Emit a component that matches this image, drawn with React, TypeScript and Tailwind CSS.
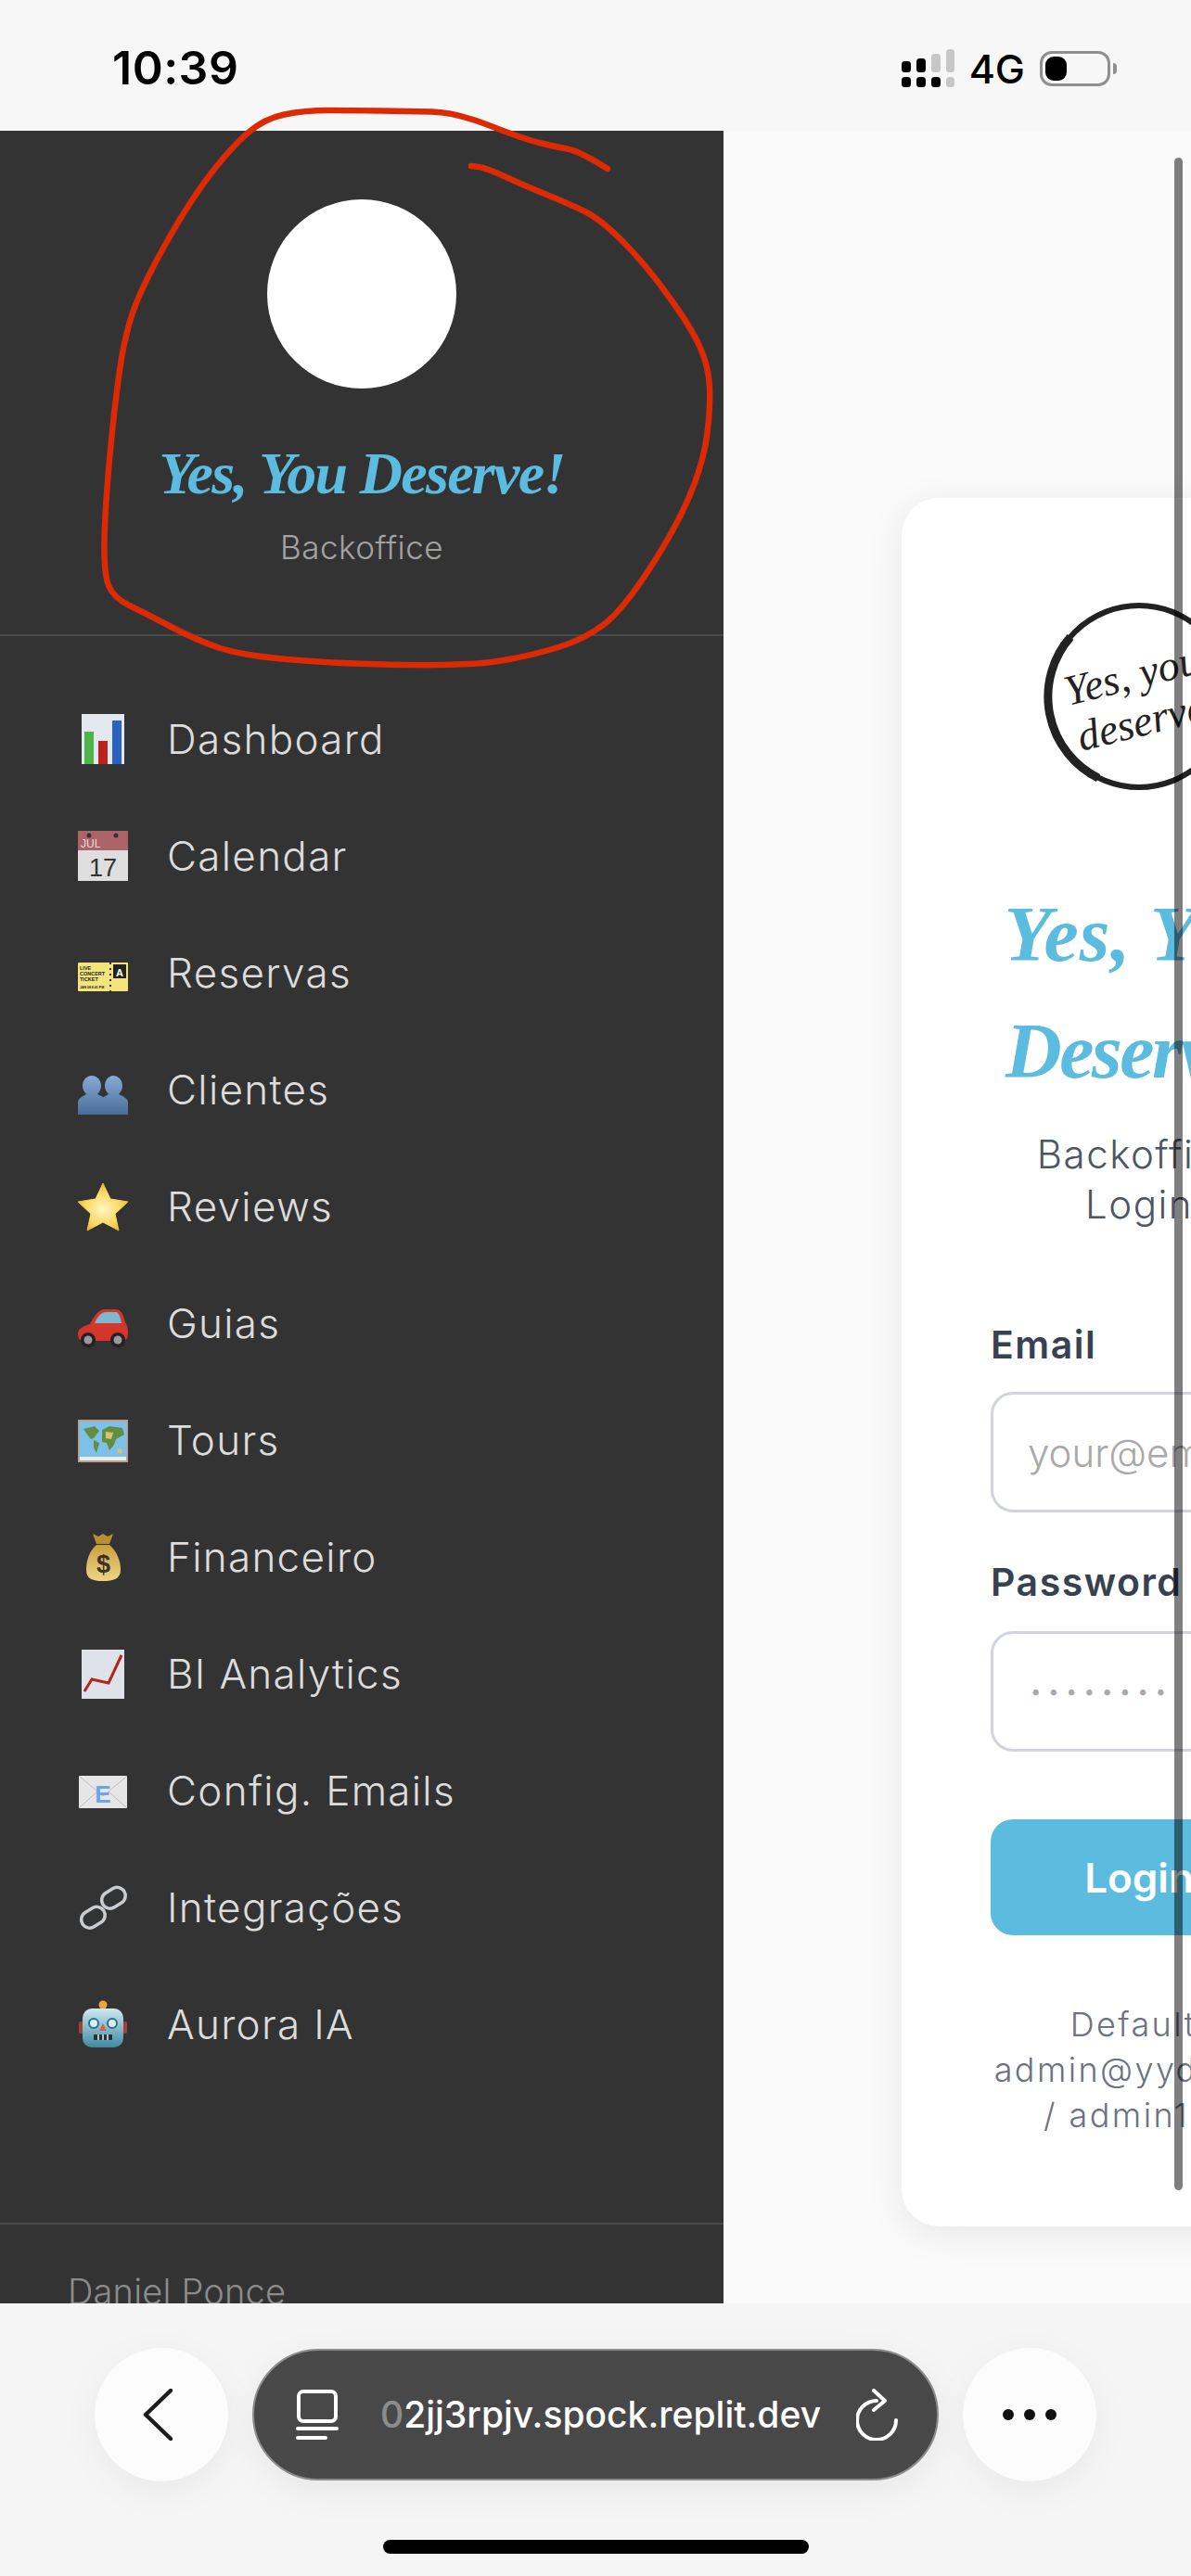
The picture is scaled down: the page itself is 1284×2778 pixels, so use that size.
const UI = "font-['Inter','Liberation_Sans',sans-serif]"
const SCRIPT = "font-['Liberation_Serif',serif] italic font-bold"

// smooth line through the hand drawn points
function smooth(pts: number[][]) {
  let d = `M${pts[0][0]} ${pts[0][1]}`
  for (let i = 1; i < pts.length - 1; i++) {
    const mx = (pts[i][0] + pts[i + 1][0]) / 2
    const my = (pts[i][1] + pts[i + 1][1]) / 2
    d += ` Q${pts[i][0]} ${pts[i][1]} ${mx} ${my}`
  }
  const last = pts[pts.length - 1]
  return d + ` L${last[0]} ${last[1]}`
}

const scribble = [
  [655, 182], [625, 163], [598, 158], [565, 150], [491, 121], [440, 120], [380, 119], [328, 119], [285, 128],
  [250, 158], [205, 216], [156, 303], [135, 358], [123, 441], [113, 551], [112, 620], [123, 645], [156, 661],
  [213, 691], [262, 707], [369, 716], [508, 718], [573, 707], [631, 689], [672, 657], [729, 569], [758, 500],
  [766, 441], [764, 395], [745, 353], [696, 285], [647, 236], [614, 220], [565, 200], [524, 181], [508, 179],
]

function Icon({ children }: { children: React.ReactNode }) {
  return (
    <svg viewBox="0 0 54 54" className="w-[54px] h-[54px] shrink-0">
      {children}
    </svg>
  )
}

const icons: Record<string, React.ReactNode> = {
  chart: (
    <Icon>
      <rect x="4" y="0" width="46" height="54" fill="#e3e7ee" />
      <rect x="7" y="19" width="10" height="35" fill="#4db548" />
      <rect x="22" y="29" width="10" height="25" fill="#b9231b" />
      <rect x="37" y="7" width="10" height="47" fill="#2a62c4" />
    </Icon>
  ),
  calendar: (
    <Icon>
      <rect x="0" y="0" width="54" height="21" fill="#ac6469" />
      <rect x="0" y="21" width="54" height="33" fill="#dedede" />
      <circle cx="12" cy="5" r="2.5" fill="#333" />
      <circle cx="41" cy="5" r="2.5" fill="#333" />
      <text x="3" y="18" fontSize="12" fill="#f0dcdc" fontFamily="Liberation Sans">JUL</text>
      <text x="27" y="49" fontSize="27" textAnchor="middle" fill="#333" fontFamily="Liberation Sans">17</text>
    </Icon>
  ),
  ticket: (
    <Icon>
      <rect x="0" y="16" width="54" height="31" rx="1" fill="#f3e57b" />
      <rect x="38" y="18" width="14" height="15" fill="#222" />
      <text x="45" y="31" fontSize="11" fontWeight="700" textAnchor="middle" fill="#fff" fontFamily="Liberation Sans">A</text>
      <text x="2" y="24" fontSize="5.5" fontWeight="700" fill="#222" fontFamily="Liberation Sans">LIVE</text>
      <text x="2" y="30" fontSize="5.5" fontWeight="700" fill="#222" fontFamily="Liberation Sans">CONCERT</text>
      <text x="2" y="36" fontSize="5.5" fontWeight="700" fill="#222" fontFamily="Liberation Sans">TICKET</text>
      <text x="2" y="44" fontSize="3.5" fontWeight="700" fill="#222" fontFamily="Liberation Sans">JAN 08 8:41 PM</text>
      <path d="M35 16v31" stroke="#333" strokeWidth="2" strokeDasharray="2 4" />
    </Icon>
  ),
  clients: (
    <Icon>
      <defs>
        <linearGradient id="cl" x1="0" y1="0" x2="0" y2="1">
          <stop offset="0" stopColor="#86aad6" />
          <stop offset="1" stopColor="#4a6d99" />
        </linearGradient>
      </defs>
      <path d="M38 12c6 0 10 5 10 11 0 4-2 7-4 9 4 2 9 4 10 8v14H24V40c1-4 6-6 9-8-2-2-4-5-4-9 0-6 4-11 9-11z" fill="url(#cl)" />
      <path d="M15 12c6 0 10 5 10 11 0 4-2 7-4 9 4 2 9 4 10 8v14H0V40c1-4 6-6 9-8-2-2-4-5-4-9 0-6 4-11 10-11z" fill="url(#cl)" />
    </Icon>
  ),
  star: (
    <Icon>
      <defs>
        <radialGradient id="st" cx="0.5" cy="0.55" r="0.6">
          <stop offset="0" stopColor="#fff6c4" />
          <stop offset="0.6" stopColor="#fbd860" />
          <stop offset="1" stopColor="#e8a81f" />
        </radialGradient>
      </defs>
      <path d="M27 2l8 17 19 3-14 13 4 18-17-9-17 9 4-18L0 22l19-3z" fill="url(#st)" stroke="url(#st)" strokeWidth="1" strokeLinejoin="round" />
    </Icon>
  ),
  car: (
    <Icon>
      <path d="M0 38c0-5 6-8 13-10 4-8 9-16 16-16h11c7 0 9 6 11 14 2 3 3 6 3 12 0 6-3 8-6 8H6c-4 0-6-3-6-8z" fill="#d5362b" />
      <path d="M18 27c3-7 7-12 12-12h11c3 0 5 6 6 12z" fill="#7fb7cf" />
      <circle cx="11" cy="45" r="8" fill="#222" />
      <circle cx="11" cy="45" r="4.5" fill="#9a9a9a" />
      <circle cx="43" cy="45" r="8" fill="#222" />
      <circle cx="43" cy="45" r="4.5" fill="#9a9a9a" />
    </Icon>
  ),
  map: (
    <Icon>
      <rect x="0" y="5" width="54" height="46" fill="#c09f8a" />
      <rect x="1.5" y="7" width="51" height="42" fill="#7fc0ea" />
      <path d="M6 15l12-3 5 5-6 8-3 1-4-5zM17 27l6 3-3 11-3-6zM26 16l8-4 14 2 2 7-9 5-2 6-5 6-3-8-5-1z" fill="#5f8f3f" />
      <path d="M30 18l8 1-2 7-6-1zM43 36l5 1-1 5-5-2z" fill="#d8c374" />
      <path d="M2 45h50v4H2z" fill="#e6eef2" />
    </Icon>
  ),
  money: (
    <Icon>
      <defs>
        <linearGradient id="mo" x1="0" y1="0" x2="0" y2="1">
          <stop offset="0" stopColor="#caa03f" />
          <stop offset="1" stopColor="#efd486" />
        </linearGradient>
      </defs>
      <path d="M16 2l6 3 5-3 5 3 6-3-4 11h-14z" fill="#b98f34" />
      <path d="M20 14h14c8 7 12 17 12 27 0 10-8 12-19 12S9 51 9 41c0-10 3-20 11-27z" fill="url(#mo)" />
      <text x="27.5" y="44" fontSize="27" fontWeight="700" textAnchor="middle" fill="#3a3428" fontFamily="Liberation Sans">$</text>
    </Icon>
  ),
  trend: (
    <Icon>
      <rect x="4" y="1" width="46" height="54" fill="#dfe2e9" />
      <path d="M7 46l8-13 18 4 14-30" fill="none" stroke="#b3261e" strokeWidth="3" />
    </Icon>
  ),
  mail: (
    <Icon>
      <rect x="1" y="11" width="52" height="35" rx="1" fill="#e6e6e6" />
      <path d="M2 12l25 21 25-21M2 45l19-17M52 45L33 28" fill="none" stroke="#bdbdbd" strokeWidth="1" />
      <text x="27" y="40" fontSize="26" fontWeight="700" textAnchor="middle" fill="#6ea3ea" fontFamily="Liberation Sans">E</text>
    </Icon>
  ),
  link: (
    <Icon>
      <g fill="none" stroke="#c9ccd0" strokeWidth="3.5">
        <rect x="-13" y="-9" width="27" height="18" rx="9" transform="translate(16 38) rotate(-32)" />
        <rect x="-13" y="-9" width="27" height="18" rx="9" transform="translate(38 17) rotate(-32)" />
      </g>
    </Icon>
  ),
  robot: (
    <Icon>
      <defs>
        <linearGradient id="ro" x1="0" y1="0" x2="0" y2="1">
          <stop offset="0" stopColor="#cfe9ef" />
          <stop offset="1" stopColor="#3f8aa0" />
        </linearGradient>
      </defs>
      <circle cx="27" cy="6" r="4.5" fill="#e9a838" />
      <rect x="1" y="24" width="5" height="13" rx="2" fill="#a8403a" />
      <rect x="48" y="24" width="5" height="13" rx="2" fill="#a8403a" />
      <rect x="5" y="10" width="44" height="42" rx="10" fill="url(#ro)" />
      <circle cx="17" cy="26" r="5" fill="#d6f1f6" stroke="#2d6f86" strokeWidth="2" />
      <circle cx="37" cy="26" r="5" fill="#d6f1f6" stroke="#2d6f86" strokeWidth="2" />
      <path d="M27 26l4 8h-8z" fill="#d9604f" />
      <rect x="17" y="38" width="20" height="6" rx="1" fill="#22333a" />
      <path d="M22 38v6M27 38v6M32 38v6" stroke="#e6f2f4" strokeWidth="1.5" />
    </Icon>
  ),
}

const navItems = [
  { label: 'Dashboard', icon: 'chart' },
  { label: 'Calendar', icon: 'calendar' },
  { label: 'Reservas', icon: 'ticket' },
  { label: 'Clientes', icon: 'clients' },
  { label: 'Reviews', icon: 'star' },
  { label: 'Guias', icon: 'car' },
  { label: 'Tours', icon: 'map' },
  { label: 'Financeiro', icon: 'money' },
  { label: 'BI Analytics', icon: 'trend' },
  { label: 'Config. Emails', icon: 'mail' },
  { label: 'Integrações', icon: 'link' },
  { label: 'Aurora IA', icon: 'robot' },
]

function StatusBar() {
  return (
    <div className="h-[141px] shrink-0 bg-[#f7f7f7] flex items-start justify-between pt-[46px] pl-[121px] pr-[80px]">
      <span className={`${UI} text-[50px] leading-[54px] font-semibold text-black tracking-[0.5px]`}>10:39</span>
      <div className="flex items-center gap-[12px] pt-[5px]">
        <svg width="57" height="42" viewBox="0 0 57 42" className="shrink-0 mr-[4px] -mt-[3px]">
          <rect x="0" y="14" width="10" height="12" rx="3.5" />
          <rect x="16" y="11" width="10" height="15" rx="3.5" />
          <rect x="32" y="6" width="10" height="20" rx="3.5" fill="#c7c7c7" />
          <rect x="48" y="1" width="9" height="25" rx="3.5" fill="#c7c7c7" />
          <rect x="0" y="31" width="10" height="11" rx="3.5" />
          <rect x="16" y="31" width="10" height="11" rx="3.5" />
          <rect x="32" y="31" width="10" height="11" rx="3.5" />
          <rect x="48" y="31" width="9" height="11" rx="3.5" fill="#c7c7c7" />
        </svg>
        <span className={`${UI} text-[43px] leading-[46px] font-medium text-black`}>4G</span>
        <div className="flex items-center gap-[3px] ml-[4px]">
          <div className="w-[76px] h-[38px] rounded-[13px] border-[3px] border-[#8f8f8f] p-[3px]">
            <div className="w-[23px] h-full rounded-[9px] bg-black" />
          </div>
          <div className="w-[4px] h-[12px] rounded-r-full bg-[#8f8f8f]" />
        </div>
      </div>
    </div>
  )
}

function Sidebar() {
  return (
    <aside className="w-[780px] shrink-0 bg-[#333333] flex flex-col overflow-hidden">
      <div className="h-[545px] shrink-0 flex flex-col items-center pt-[74px] border-b-2 border-[#4a4a4a]">
        <div className="w-[204px] h-[204px] rounded-full bg-white" />
        <div className={`${SCRIPT} mt-[56px] text-[64px] leading-[72px] tracking-[-1.7px] text-[#5bbcdf] whitespace-nowrap`}>
          Yes, You Deserve!
        </div>
        <div className={`${UI} mt-[23px] text-[35px] leading-[40px] font-light tracking-[0.5px] text-[#a3a3a3]`}>Backoffice</div>
      </div>

      <nav className="flex-1 pt-[48px] pl-[84px]">
        {navItems.map((item) => (
          <div key={item.label} className="h-[126px] flex items-center gap-[42px]">
            {icons[item.icon]}
            <span className={`${UI} text-[44px] font-light tracking-[1.3px] text-[#dcdcdc] whitespace-nowrap`}>
              {item.label}
            </span>
          </div>
        ))}
      </nav>

      <div className="h-[87px] shrink-0 border-t-2 border-[#4a4a4a] pl-[73px] pt-[50px]">
        <div className={`${UI} text-[38px] leading-[44px] font-light tracking-[0.2px] text-[#8c8c8c] whitespace-nowrap`}>Daniel Ponce</div>
      </div>
    </aside>
  )
}

function LoginCard() {
  return (
    <div className="w-[512px] h-[1864px] shrink-0 rounded-[40px] bg-white shadow-[0_8px_40px_rgba(0,0,0,0.08)] px-[96px] pt-[110px]">
      <div className="flex justify-center">
        <svg width="208" height="208" viewBox="0 0 208 208" className="shrink-0">
          <circle cx="104" cy="104" r="98" fill="none" stroke="#222" strokeWidth="6" />
          <path d="M30 40a98 98 0 0 0 30 152" fill="none" stroke="#222" strokeWidth="9" />
          <text x="100" y="96" textAnchor="middle" fontSize="46" fontStyle="italic" fill="#222" fontFamily="Liberation Serif" transform="rotate(-14 100 96)">Yes, you</text>
          <text x="110" y="146" textAnchor="middle" fontSize="46" fontStyle="italic" fill="#222" fontFamily="Liberation Serif" transform="rotate(-14 110 146)">deserve</text>
        </svg>
      </div>

      <div className={`${SCRIPT} mt-[90px] text-center text-[84px] leading-[126px] text-[#5bbcdf] whitespace-nowrap`}>
        <div className="tracking-[1px]">Yes, You</div>
        <div className="tracking-[-2.5px]">Deserve!</div>
      </div>

      <div className={`${UI} mt-[21px] text-center text-[42px] leading-[54px] font-light tracking-[1.5px] text-[#4b5563] whitespace-nowrap`}>
        <div>Backoffice</div>
        <div>Login</div>
      </div>

      <div className="mt-[99px] flex flex-col">
        <label className={`${UI} text-[41px] leading-[50px] font-semibold tracking-[1.5px] text-[#374151]`}>Email</label>
        <input
          readOnly
          placeholder="your@email.com"
          className={`${UI} mt-[26px] h-[130px] w-full rounded-[24px] border-[3px] border-[#d1d5db] bg-white pl-[37px] text-[42px] font-light placeholder:text-[#a9a9a9]`}
        />
        <label className={`${UI} mt-[50px] text-[41px] leading-[50px] font-semibold tracking-[1.5px] text-[#374151]`}>Password</label>
        <input
          readOnly
          placeholder="••••••••"
          className={`${UI} mt-[28px] h-[130px] w-full rounded-[24px] border-[3px] border-[#d1d5db] bg-white pl-[40px] text-[20px] tracking-[8px] placeholder:text-[#a9a9a9]`}
        />
        <button className={`${UI} mt-[73px] h-[125px] w-full rounded-[24px] bg-[#5bbcdf] text-[44px] font-semibold text-white`}>
          Login
        </button>
      </div>

      <div className={`${UI} mt-[72px] text-center text-[36px] leading-[49px] font-light tracking-[2.4px] text-[#6b7280] whitespace-nowrap`}>
        <div>Default:</div>
        <div>admin@yyd.com</div>
        <div>/ admin123</div>
      </div>
    </div>
  )
}

function BrowserBar() {
  return (
    <div className="h-[294px] shrink-0 bg-[#f5f5f6] pt-[48px] pl-[102px] flex flex-col">
      <div className="flex items-center gap-[26px]">
        <div className="w-[144px] h-[144px] shrink-0 rounded-full bg-[#fcfcfc] shadow-[0_10px_40px_rgba(0,0,0,0.05)] flex items-center pl-[52px]">
          <svg width="32" height="56" viewBox="0 0 32 56" fill="none" stroke="#1c1c1c" strokeWidth="4.5" strokeLinecap="round" strokeLinejoin="round">
            <path d="M30 2L3 28l27 26" />
          </svg>
        </div>

        <div className="w-[740px] h-[142px] shrink-0 rounded-full bg-[#484849] border-2 border-[#8c8c8c] flex items-center pl-[45px] text-white shadow-[0_10px_40px_rgba(0,0,0,0.06)]">
          <svg width="46" height="54" viewBox="0 0 46 54" fill="none" stroke="#fff" strokeWidth="4" strokeLinecap="round" className="shrink-0">
            <rect x="3" y="2" width="40" height="32" rx="5" />
            <path d="M2 42h42" />
            <path d="M2 52h30" strokeWidth="4" />
          </svg>
          <div className={`${UI} ml-[45px] w-[472px] text-[39px] font-medium whitespace-nowrap leading-[50px]`}>
            <span className="text-white/40">0</span>2jj3rpjv.spock.replit.dev
          </div>
          <svg width="46" height="56" viewBox="0 0 46 56" fill="none" stroke="#fff" strokeWidth="4" strokeLinecap="round" strokeLinejoin="round" className="ml-[44px] shrink-0 -translate-x-[3px]">
            <path d="M22 13A21 21 0 1 0 43 34" />
            <path d="M19 2l12 11-12 10" />
          </svg>
        </div>

        <div className="w-[144px] h-[144px] shrink-0 rounded-full bg-[#fcfcfc] shadow-[0_10px_40px_rgba(0,0,0,0.05)] flex items-center justify-center gap-[11px]">
          <div className="w-[12px] h-[12px] rounded-full bg-[#111]" />
          <div className="w-[12px] h-[12px] rounded-full bg-[#111]" />
          <div className="w-[12px] h-[12px] rounded-full bg-[#111]" />
        </div>
      </div>

      <div className="mt-[63px] ml-[311px] w-[459px] h-[15px] rounded-full bg-black" />
    </div>
  )
}

export default function App() {
  return (
    <div className="relative w-[1284px] h-[2778px] overflow-hidden flex flex-col bg-[#fafafa]">
      <StatusBar />

      <div className="flex-1 min-h-0 flex overflow-hidden">
        <Sidebar />
        <main className="relative flex-1 min-w-0 bg-[#fafafa] overflow-hidden pl-[192px] pt-[396px]">
          <LoginCard />
          {/* overlay scrollbar */}
          <div className="absolute left-[486px] top-[29px] w-[9px] h-[2192px] rounded-full bg-black/50" />
        </main>
      </div>

      <BrowserBar />

      {/* red marker annotation */}
      <svg className="absolute inset-0 pointer-events-none" width="1284" height="2778" fill="none">
        <path d={smooth(scribble)} stroke="#dc2a04" strokeWidth="6.5" strokeLinecap="round" strokeLinejoin="round" />
      </svg>
    </div>
  )
}
